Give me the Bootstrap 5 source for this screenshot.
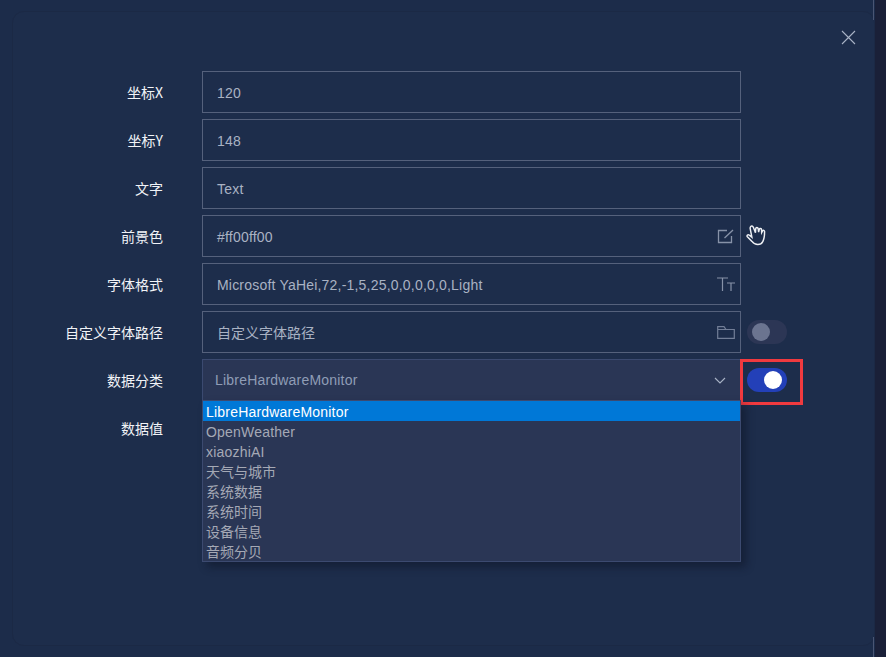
<!DOCTYPE html>
<html lang="zh">
<head>
<meta charset="utf-8">
<title>Settings</title>
<link href="https://cdn.jsdelivr.net/npm/bootstrap@5.3.0/dist/css/bootstrap.min.css" rel="stylesheet">
<style>
html,body{height:100%;}
body{background:#1c2d4a;font-family:"Noto Sans CJK SC","Liberation Sans",sans-serif;overflow:hidden;}
.stage{width:886px;height:657px;display:flex;background:#1c2c4a;position:relative;}
.side-strip{width:11px;background:#1a2038;flex:none;}
.left-zone{width:875px;height:657px;padding:11px 0 11px 12px;flex:none;}
.panel{height:635px;background:#1d2d4b;border:1px solid #1b2945;border-radius:12px;padding:59px 0 0 0;position:relative;}
.edge-line{position:absolute;left:873px;width:1px;height:20px;background:#4a5674;}
.edge-top{top:0}.edge-bot{bottom:0}
.close-x{position:absolute;right:18px;top:18px;background:none;border:0;padding:0;line-height:0;}
.frow{height:42px;margin-bottom:6px;}
.flabel{width:150px;flex:none;text-align:right;font-size:14px;color:#f1f3f7;line-height:20px;margin-right:1px;}
.fbox{width:539px;height:42px;flex:none;margin-left:38px;border:1px solid #55617c;padding:0 5px 0 14px;color:#a9b2c3;font-size:14px;font-family:"Liberation Sans","Noto Sans CJK SC",sans-serif;}
.fbox span{letter-spacing:.2px;padding-top:2px;}
.fbox .zh-val{letter-spacing:0;}
.tailw{width:62px;flex:none;padding-left:6px;}
.hand-ico{margin-left:-3px;}
.sw{width:40px;height:24px;border-radius:12px;position:relative;flex:none;}
.sw i{position:absolute;top:3px;width:18px;height:18px;border-radius:50%;}
.sw-off{background:#2c3655;}
.sw-off i{left:5px;background:#6b7490;}
.sw-on{background:#2340b8;}
.sw-on i{left:17px;background:#fff;}
.redbox{width:63px;height:46px;border:3px solid #f03a3f;margin-left:-1px;flex:none;padding:6px 0 0 4px;}
.selbox{width:539px;height:42px;flex:none;margin-left:38px;background:#2a3655;border:1px solid #3b4a70;padding:0 14px 0 12px;color:#8f9db6;font-size:14px;letter-spacing:.2px;font-family:"Liberation Sans",sans-serif;}
.selbox span{padding-top:1px;}
.droplist{position:absolute;left:189px;top:388px;width:539px;background:#2a3655;border:1px solid #3c4a70;box-shadow:5px 5px 8px rgba(10,15,30,.45);font-family:"Liberation Sans","Noto Sans CJK SC",sans-serif;font-size:14px;line-height:22px;color:#a5a9b5;letter-spacing:.2px;}
.ditem{height:20px;padding-left:3px;white-space:nowrap;}
.ditem-zh{letter-spacing:0;}
.ditem-on{background:#0078d7;color:#fff;}
</style>
</head>
<body>
<div class="stage">
<div class="left-zone">
<div class="panel">
<button class="close-x" type="button" aria-label="close"><svg width="15" height="15" viewBox="0 0 15 15"><path d="M1 1L14 14M14 1L1 14" stroke="#a9b3c6" stroke-width="1.1" fill="none"/></svg></button>

<div class="frow d-flex"><div class="flabel align-self-center">坐标X</div><div class="fbox d-flex align-items-center"><span>120</span></div></div>
<div class="frow d-flex"><div class="flabel align-self-center">坐标Y</div><div class="fbox d-flex align-items-center"><span>148</span></div></div>
<div class="frow d-flex"><div class="flabel align-self-center">文字</div><div class="fbox d-flex align-items-center"><span>Text</span></div></div>
<div class="frow d-flex"><div class="flabel align-self-center">前景色</div><div class="fbox d-flex align-items-center justify-content-between"><span>#ff00ff00</span>
<svg width="18" height="15" viewBox="0 0 18 15"><path d="M10 1.5H1.5V13.5H14.5V7" stroke="#8792a8" stroke-width="1.3" fill="none"/><path d="M7.5 9L16 1" stroke="#8792a8" stroke-width="1.3" fill="none"/></svg></div>
<div class="tailw d-flex align-items-center"><svg class="hand-ico" width="27" height="28" viewBox="0 0 24 24"><path d="M6 3.5c1-1 2 0 2.4 1l1.8 4.6.2-3.6c.1-1.3 2-1.3 2.2 0l.4 3 .6-2.4c.3-1.1 2-.9 2 .3l.1 2.5.8-1.5c.5-.8 1.8-.4 1.8.6 0 3-.3 6.5-1.6 9-.8 1.6-2.4 2.6-4.4 2.6-2.3 0-3.9-1-5.2-2.8L3 12.7c-.8-1.1.5-2.5 1.7-1.5L7 13 5.5 5.4c-.1-.7 0-1.4.5-1.9z" stroke="#eef0f4" stroke-width="1.3" fill="#1d2d4b"/></svg></div></div>
<div class="frow d-flex"><div class="flabel align-self-center">字体格式</div><div class="fbox d-flex align-items-center justify-content-between"><span>Microsoft YaHei,72,-1,5,25,0,0,0,0,0,Light</span>
<svg width="18" height="14" viewBox="0 0 18 14"><path d="M0 1H11M5.5 1V14M10 6H18M14 6V14" stroke="#8792a8" stroke-width="1.2" fill="none"/></svg></div></div>
<div class="frow d-flex"><div class="flabel align-self-center">自定义字体路径</div><div class="fbox d-flex align-items-center justify-content-between"><span class="zh-val">自定义字体路径</span>
<svg width="18" height="13" viewBox="0 0 18 13"><path d="M.7.7H7L9 3.5H17.3V12.3H.7ZM.7 3.5H9" stroke="#727e97" stroke-width="1.2" fill="none"/></svg></div>
<div class="tailw d-flex align-items-center"><div class="sw sw-off"><i></i></div></div></div>
<div class="frow d-flex"><div class="flabel align-self-center">数据分类</div><div class="selbox d-flex align-items-center justify-content-between"><span>LibreHardwareMonitor</span>
<svg width="12" height="7" viewBox="0 0 12 7"><path d="M1 1L6 6L11 1" stroke="#a9b3c6" stroke-width="1.1" fill="none"/></svg></div>
<div class="redbox"><div class="sw sw-on"><i></i></div></div></div>
<div class="frow d-flex"><div class="flabel align-self-center">数据值</div></div>

<div class="droplist">
<div class="ditem ditem-on">LibreHardwareMonitor</div>
<div class="ditem">OpenWeather</div>
<div class="ditem">xiaozhiAI</div>
<div class="ditem ditem-zh">天气与城市</div>
<div class="ditem ditem-zh">系统数据</div>
<div class="ditem ditem-zh">系统时间</div>
<div class="ditem ditem-zh">设备信息</div>
<div class="ditem ditem-zh">音频分贝</div>
</div>
</div>
</div>
<div class="side-strip"></div>
<div class="edge-line edge-top"></div><div class="edge-line edge-bot"></div>
</div>
<script src="https://cdn.jsdelivr.net/npm/bootstrap@5.3.0/dist/js/bootstrap.bundle.min.js"></script>
</body>
</html>
